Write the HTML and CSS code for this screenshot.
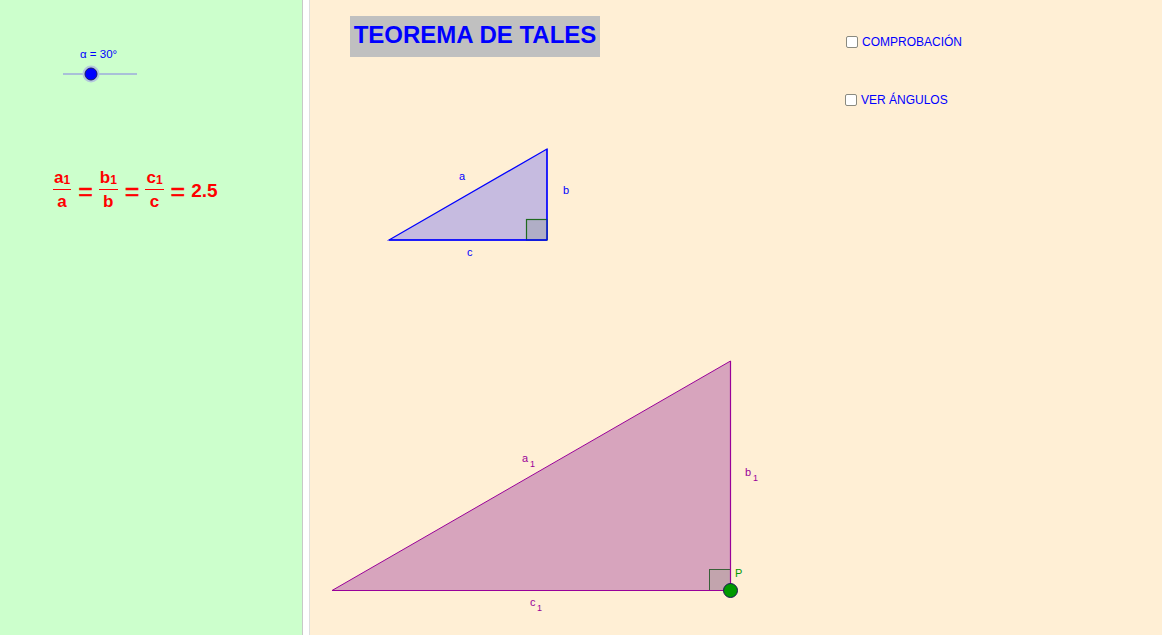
FILE: index.html
```html
<!DOCTYPE html>
<html lang="es">
<head>
<meta charset="utf-8">
<title>Teorema de Tales</title>
<link rel="stylesheet" href="styles.css">
</head>
<body>
<div class="app">
  <div class="algebra">
    <div class="slider">
      <div class="slider-label">α = 30°</div>
      <svg class="slider-svg" width="80" height="20" viewBox="0 0 80 20">
        <line x1="3" y1="10" x2="77" y2="10" stroke="#a9c0d8" stroke-width="2"/>
        <circle cx="31" cy="10" r="8.5" fill="#b3c8dc"/>
        <circle cx="31" cy="10" r="6" fill="#0000ff" stroke="#1a1a66" stroke-width="1"/>
      </svg>
    </div>
    <div class="formula">
      <span class="frac"><span class="num">a<sub>1</sub></span><span class="den">a</span></span>
      <span class="eq">=</span>
      <span class="frac"><span class="num">b<sub>1</sub></span><span class="den">b</span></span>
      <span class="eq">=</span>
      <span class="frac"><span class="num">c<sub>1</sub></span><span class="den">c</span></span>
      <span class="eq">=</span>
      <span class="val">2.5</span>
    </div>
  </div>
  <div class="divider"></div>
  <div class="canvas">
    <div class="title">TEOREMA DE TALES</div>
    <label class="check check1"><span class="box"></span>COMPROBACIÓN</label>
    <label class="check check2"><span class="box"></span>VER ÁNGULOS</label>
    <svg class="drawing" width="852" height="635" viewBox="310 0 852 635">
      <polygon points="389,240 547,149 547,240" fill="#c6bbe0" stroke="#0000ff" stroke-width="1.2"/>
      <rect x="526.5" y="219.5" width="20.5" height="20.5" fill="#b0aec6" stroke="#1f6a1f" stroke-width="1.2"/>
      <line x1="547" y1="149" x2="547" y2="240" stroke="#0000ff" stroke-width="1.2"/>
      <line x1="389" y1="240" x2="547" y2="240" stroke="#0000ff" stroke-width="1.5"/>
      <text x="459" y="180" class="lbl-blue">a</text>
      <text x="563" y="194" class="lbl-blue">b</text>
      <text x="467" y="256" class="lbl-blue">c</text>

      <polygon points="332,590.5 730.5,361 730.5,590.5" fill="#d7a4bd" stroke="#990099" stroke-width="1"/>
      <rect x="709.5" y="569.5" width="21" height="21" fill="#c2a4ad" stroke="#3a603a" stroke-width="1"/>
      <line x1="730.5" y1="361" x2="730.5" y2="590.5" stroke="#990099" stroke-width="1.2"/>
      <line x1="332" y1="590.5" x2="730.5" y2="590.5" stroke="#990099" stroke-width="1.2"/>
      <text x="522" y="462" class="lbl-purple">a</text><text x="530" y="467" class="lbl-sub">1</text>
      <text x="745" y="476" class="lbl-purple">b</text><text x="753" y="481" class="lbl-sub">1</text>
      <text x="530" y="606" class="lbl-purple">c</text><text x="537" y="611" class="lbl-sub">1</text>
      <circle cx="730.5" cy="590.5" r="7" fill="#009900" stroke="#1a1a55" stroke-width="1"/>
      <text x="735" y="577" class="lbl-green">P</text>
    </svg>
  </div>
</div>
</body>
</html>
```
FILE: styles.css
```css
html, body {
  margin: 0;
  padding: 0;
  width: 1162px;
  height: 635px;
  overflow: hidden;
  font-family: "Liberation Sans", Arial, sans-serif;
}
.app {
  display: flex;
  width: 1162px;
  height: 635px;
}
.algebra {
  width: 302px;
  height: 635px;
  background: #ccffcc;
  position: relative;
  flex: none;
}
.divider {
  width: 6px;
  flex: none;
  background: #ffffff;
  border-left: 1px solid #c8c8c8;
  border-right: 1px solid #dedede;
}
.canvas {
  flex: 1;
  height: 635px;
  background: #ffefd5;
  position: relative;
}
.slider {
  position: absolute;
  left: 60px;
  top: 47px;
  display: flex;
  flex-direction: column;
}
.slider-label {
  color: #0000ff;
  font-size: 11.5px;
  margin-left: 20px;
  line-height: 14px;
}
.slider-svg {
  display: block;
  margin-top: 3px;
}
.formula {
  position: absolute;
  left: 53px;
  top: 167px;
  display: flex;
  align-items: center;
  color: #ff0000;
  font-family: "Liberation Sans", Arial, sans-serif;
  font-weight: bold;
  font-size: 17px;
}
.frac {
  display: inline-flex;
  flex-direction: column;
  align-items: center;
}
.num {
  line-height: 22px;
  padding: 0 1px;
  border-bottom: 1px solid #ff0000;
}
.num sub {
  font-size: 12px;
  vertical-align: -1px;
  line-height: 0;
}
.den {
  line-height: 24px;
}
.eq {
  font-size: 25px;
  margin: 0 6px 0 7px;
  font-weight: normal;
  -webkit-text-stroke: 0.5px #ff0000;
  line-height: 24px;
}
.val {
  font-size: 19px;
}
.title {
  position: absolute;
  left: 40px;
  top: 16px;
  width: 250px;
  height: 41px;
  background: #c0c0c0;
  color: #0000ff;
  font-weight: bold;
  font-size: 24px;
  line-height: 38px;
  text-align: center;
  z-index: 2;
}
.check {
  position: absolute;
  display: flex;
  align-items: center;
  color: #0000ff;
  font-size: 12px;
  z-index: 2;
}
.check1 { left: 536px; top: 35px; }
.check2 { left: 535px; top: 93px; }
.box {
  width: 10px;
  height: 10px;
  border: 1.5px solid #8a8a80;
  border-radius: 2px;
  background: #ffffff;
  margin-right: 4px;
}
.drawing {
  position: absolute;
  left: 0;
  top: 0;
}
.lbl-blue {
  fill: #0000ff;
  font-size: 11px;
  font-family: "Liberation Sans", Arial, sans-serif;
}
.lbl-purple {
  fill: #990099;
  font-size: 11px;
  font-family: "Liberation Sans", Arial, sans-serif;
}
.lbl-sub {
  fill: #990099;
  font-size: 9px;
  font-family: "Liberation Sans", Arial, sans-serif;
}
.lbl-green {
  fill: #009900;
  font-size: 11px;
  font-family: "Liberation Sans", Arial, sans-serif;
}
```
